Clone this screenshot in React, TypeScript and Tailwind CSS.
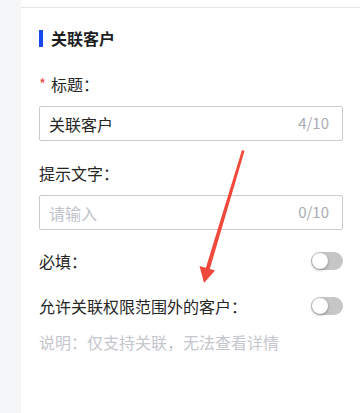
import React from "react";

function Toggle() {
  return (
    <div className="relative h-[18px] w-[32px] rounded-full bg-[#c6c6c6]">
      <div className="absolute left-[1px] top-[1px] h-[16px] w-[16px] rounded-full bg-white shadow-[0_1px_3px_rgba(0,0,0,0.35)]" />
    </div>
  );
}

function CountInput({ value, placeholder, count }: { value?: string; placeholder?: string; count: string }) {
  return (
    <div className="mt-[12px] flex h-[35px] items-center justify-between rounded-[2px] border border-[#c9cbd0] pl-[9px] pr-[13px] text-[16px]">
      {value ? <span className="text-[#262626]">{value}</span> : <span className="text-[#c0c4cc]">{placeholder}</span>}
      <span className="text-[15px] text-[#a8abb2]">{count}</span>
    </div>
  );
}

export default function App() {
  return (
    <div
      className="relative flex h-[413px] w-[360px] overflow-hidden bg-white"
      style={{ fontFamily: "'Noto Sans CJK SC', 'Noto Sans', sans-serif" }}
    >
      <div className="w-[21px] shrink-0 bg-[#f5f6f8]" />
      <div className="flex-1 bg-white pt-[7px]">
        <div className="border-t border-[#e6e6e6] pl-[18px] pr-[17px]">
          <div className="mt-[22px] flex h-[17px] items-center">
            <div className="h-[17px] w-[4px] bg-[#1948f7]" />
            <span className="ml-[8px] text-[16px] font-bold leading-[17px] text-[#1f1f1f]">关联客户</span>
          </div>

          <div className="mt-[27px] flex h-[20px] items-center text-[16px] text-[#262626]">
            <span className="w-[12px] text-[15px] text-[#f24b4b]">*</span>
            <span>标题：</span>
          </div>
          <CountInput value="关联客户" count="4/10" />

          <div className="mt-[22px] flex h-[20px] items-center text-[16px] text-[#262626]">提示文字：</div>
          <CountInput placeholder="请输入" count="0/10" />

          <div className="mt-[21px] flex h-[20px] items-center justify-between text-[16px] text-[#262626]">
            <span>必填：</span>
            <Toggle />
          </div>

          <div className="mt-[25px] flex h-[20px] items-center justify-between text-[16px] text-[#262626]">
            <span>允许关联权限范围外的客户：</span>
            <Toggle />
          </div>

          <div className="mt-[16px] flex h-[20px] items-center text-[16px] text-[#c4c6cb]">说明：仅支持关联，无法查看详情</div>
        </div>
      </div>

      <svg className="pointer-events-none absolute left-0 top-0" width="360" height="413" viewBox="0 0 360 413">
        <polygon points="242,150 244.5,151 209.5,270 205.5,269" fill="#f1483c" />
        <polygon points="204,283 199.5,266 215,270.5" fill="#f1483c" />
      </svg>
    </div>
  );
}
